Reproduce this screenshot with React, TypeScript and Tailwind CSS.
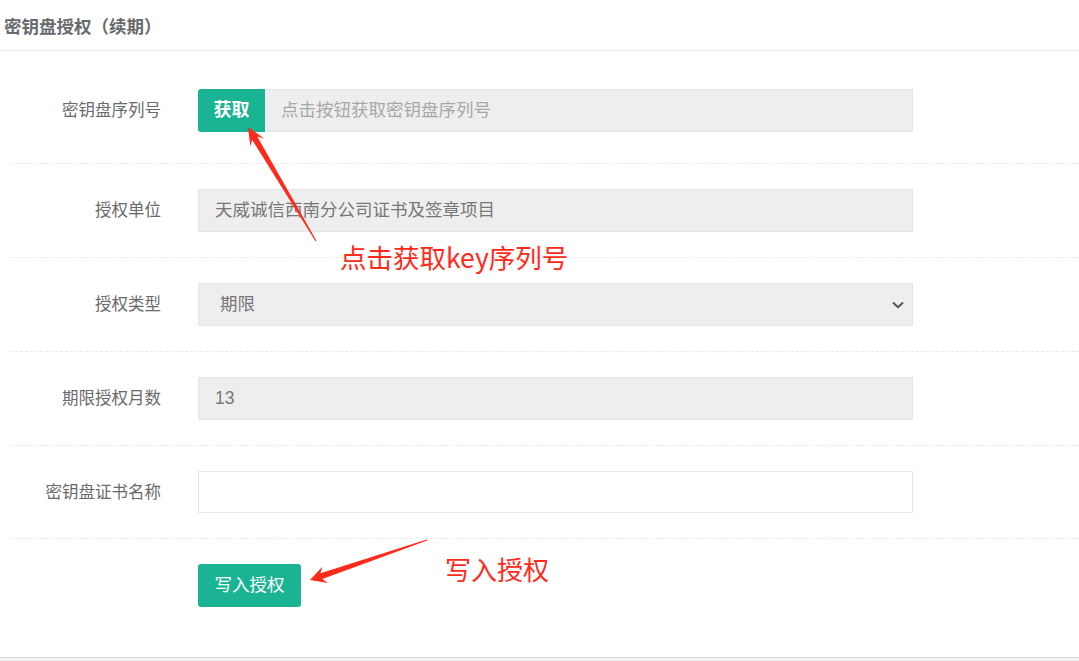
import React from "react";

type Pt = [number, number];

function arrowPoints(tip: Pt, tail: Pt, headLen = 16, headHalf = 8, neckBack = 12, neckHalf = 3, tailHalf = 0.6): string {
  const dx = tail[0] - tip[0];
  const dy = tail[1] - tip[1];
  const len = Math.hypot(dx, dy);
  const bx = dx / len;
  const by = dy / len;
  const nx = -by;
  const ny = bx;
  const p = (back: number, side: number): Pt => [tip[0] + bx * back + nx * side, tip[1] + by * back + ny * side];
  const pts: Pt[] = [
    tip,
    p(headLen, headHalf),
    p(neckBack, neckHalf),
    p(len, tailHalf),
    p(len, -tailHalf),
    p(neckBack, -neckHalf),
    p(headLen, -headHalf),
  ];
  return pts.map((q) => `${q[0].toFixed(1)},${q[1].toFixed(1)}`).join(" ");
}

const FONT = { fontFamily: '"Liberation Sans", "Noto Sans CJK SC", sans-serif' };

function Row({ label, children, first = false }: { label: string; children: React.ReactNode; first?: boolean }) {
  return (
    <div className={`ml-[10px] flex items-center border-b border-dashed border-[#e7eaec] ${first ? "pb-[31px]" : "pt-[25px] pb-[25px]"}`}>
      <div className="w-[151px] shrink-0 text-right text-[16.5px] text-[#676a6c]">{label}</div>
      <div className="ml-[37px] w-[715px]">{children}</div>
    </div>
  );
}

export default function App() {
  return (
    <div className="relative h-[661px] w-[1079px] overflow-hidden bg-[#f3f3f4]" style={FONT}>
      <div className="h-[657px] bg-white">
        <div className="flex h-[51px] items-center border-b border-[#e7eaec] pl-[4px] pt-[4px] text-[17.5px] font-bold text-[#676a6c]">
          密钥盘授权（续期）
        </div>
        <div className="pt-[38px]">
          <Row label="密钥盘序列号" first>
            <div className="flex h-[43px]">
              <button className="w-[67px] shrink-0 rounded-l-[3px] bg-[#1ab394] text-[18px] font-bold text-white">获取</button>
              <div className="flex flex-1 items-center border border-l-0 border-[#e5e6e7] bg-[#eeeeee] pl-[16px] text-[17.5px] text-[#a8a8a8]">
                点击按钮获取密钥盘序列号
              </div>
            </div>
          </Row>
          <Row label="授权单位">
            <div className="flex h-[43px] items-center border border-[#e5e6e7] bg-[#eeeeee] pl-[16px] text-[17.5px] text-[#777777]">
              天威诚信西南分公司证书及签章项目
            </div>
          </Row>
          <Row label="授权类型">
            <div className="flex h-[43px] items-center justify-between border border-[#e5e6e7] bg-[#eeeeee] pl-[21px] pr-[6px] text-[17.5px] text-[#777777]">
              <span>期限</span>
              <svg width="14" height="10" viewBox="0 0 14 10" className="mr-[1px]">
                <path d="M2.5 3 L7 7.2 L11.5 3" fill="none" stroke="#555" strokeWidth="2" strokeLinecap="round" strokeLinejoin="round" />
              </svg>
            </div>
          </Row>
          <Row label="期限授权月数">
            <div className="flex h-[43px] items-center border border-[#e5e6e7] bg-[#eeeeee] pl-[16px] text-[17.5px] text-[#777777]">13</div>
          </Row>
          <Row label="密钥盘证书名称">
            <div className="h-[42px] border border-[#e5e6e7] bg-white" />
          </Row>
          <div className="ml-[198px] pt-[25px]">
            <button className="h-[43px] w-[103px] rounded-[3px] bg-[#1ab394] text-[17.5px] text-white">写入授权</button>
          </div>
        </div>
      </div>
      <div className="absolute left-0 top-[657px] h-[1px] w-full bg-[#dcdcdc]" />

      <svg className="pointer-events-none absolute left-0 top-0" width="1079" height="661">
        <polygon points={arrowPoints([248, 127], [316, 241], 18, 8, 13, 3, 0.6)} fill="#ff2a1a" />
        <polygon points={arrowPoints([310, 580], [427, 540], 16, 8.5, 12, 3, 0.6)} fill="#ff2a1a" />
      </svg>
      <div className="absolute left-[340px] top-[239px] text-[26.5px] leading-[36px] text-[#ff2a1a]" style={{ fontFamily: '"Noto Sans CJK SC", sans-serif' }}>
        点击获取key序列号
      </div>
      <div className="absolute left-[445px] top-[551px] text-[26px] leading-[36px] text-[#ff2a1a]" style={{ fontFamily: '"Noto Sans CJK SC", sans-serif' }}>
        写入授权
      </div>
    </div>
  );
}
